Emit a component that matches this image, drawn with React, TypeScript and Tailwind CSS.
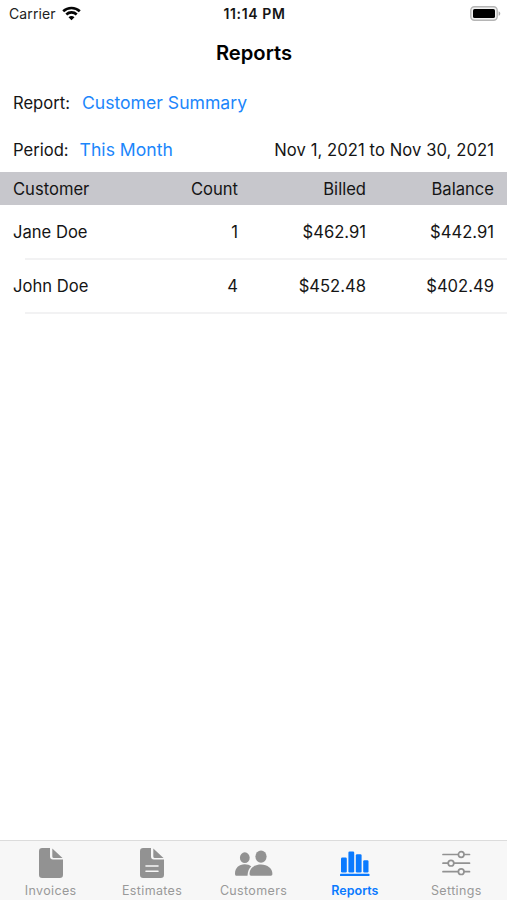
import type { ReactNode } from "react";

const rows = [
  { name: "Jane Doe", count: "1", billed: "$462.91", balance: "$442.91" },
  { name: "John Doe", count: "4", billed: "$452.48", balance: "$402.49" },
];

function StatusBar() {
  return (
    <header className="grid h-[26px] grid-cols-3 items-center pl-[9px] pr-[6px] text-[14px]">
      <div className="flex items-center gap-[6px] text-[#222]">
        <span className="tracking-[0.12px]">Carrier</span>
        <svg width="19" height="15" viewBox="0 0 19 15" fill="none" stroke="#050505" strokeWidth="2.6">
          <path d="M1.2 5.3C5.8.9 13.2.9 17.8 5.3" />
          <path d="M4.3 8.5c2.9-2.8 7.5-2.8 10.4 0" />
          <path d="M9.5 14.2 6.5 11.2c1.7-1.6 4.3-1.6 6 0Z" fill="#050505" stroke="none" />
        </svg>
      </div>
      <span className="pr-px pt-px text-center font-semibold tracking-[0.65px]">11:14 PM</span>
      <svg className="justify-self-end" width="31" height="15" viewBox="0 0 31 15">
        <rect x=".8" y=".8" width="26.4" height="13.4" rx="3.6" fill="#f2f2f2" stroke="#b5b5b5" strokeWidth="1.4" />
        <rect x="3" y="3" width="22" height="9" rx="1.6" fill="#000" />
        <path d="M28.6 5.2c2.2.8 2.2 3.8 0 4.6Z" fill="#aaa" />
      </svg>
    </header>
  );
}

function Tab({ label, active, children }: { label: string; active?: boolean; children: ReactNode }) {
  return (
    <button
      className={`flex flex-1 flex-col items-center text-[12.5px] leading-4 ${
        active ? "font-semibold text-[#0a7aff]" : "font-normal tracking-[0.35px] text-[#999]"
      }`}
    >
      <svg width="48" height="36" viewBox="0 0 48 36" className="mr-[2px] mt-[5px]">
        {children}
      </svg>
      <span className="mt-px">{label}</span>
    </button>
  );
}

export default function App() {
  return (
    <div className="flex h-[900px] w-[507px] flex-col bg-white font-['Inter',sans-serif] text-[16.6px] text-[#151515]">
      <StatusBar />
      <h1 className="flex h-[51px] items-center justify-center pl-px pt-[3px] text-[20.2px] font-semibold text-black">
        Reports
      </h1>
      <div className="flex h-[50px] items-center gap-[12px] px-[13px] pt-[2px]">
        <span className="pt-px">Report:</span>
        <button className="text-[17.6px] text-[#1b86fb]">Customer Summary</button>
      </div>
      <div className="flex h-[45px] items-center gap-[11px] px-[13px] pt-px">
        <span>Period:</span>
        <button className="text-[17.6px] text-[#1b86fb]">This Month</button>
        <span className="ml-auto tracking-[0.08px]">Nov 1, 2021 to Nov 30, 2021</span>
      </div>
      <div className="grid h-[33px] grid-cols-[125px_100px_128px_128px] items-center bg-[#c7c7cc] pl-[13px] pt-px">
        <span>Customer</span>
        <span className="text-right">Count</span>
        <span className="text-right">Billed</span>
        <span className="text-right">Balance</span>
      </div>
      {rows.map((row) => (
        <div key={row.name} className="h-[54px]">
          <div className="grid h-[53px] grid-cols-[125px_100px_128px_128px] items-center pl-[13px] pt-px">
            <span>{row.name}</span>
            <span className="text-right">{row.count}</span>
            <span className="text-right">{row.billed}</span>
            <span className="text-right">{row.balance}</span>
          </div>
          <div className="ml-[25px] h-[2px] bg-[#f2f2f3]" />
        </div>
      ))}
      <nav className="mt-auto flex h-[60px] border-t border-[#dcdcdc] bg-[#f7f7f7]">
        <Tab label="Invoices">
          <path
            d="M16.2 2H24V10.5a3 3 0 0 0 3 3H37V28.8a3.2 3.2 0 0 1-3.2 3.2H16.2a3.2 3.2 0 0 1-3.2-3.2V5.2A3.2 3.2 0 0 1 16.2 2ZM26.3 2.5 36.5 12H27.8a1.5 1.5 0 0 1-1.5-1.5Z"
            fill="#929292"
          />
        </Tab>
        <Tab label="Estimates">
          <path
            d="M16.2 2H24V10.5a3 3 0 0 0 3 3H37V28.8a3.2 3.2 0 0 1-3.2 3.2H16.2a3.2 3.2 0 0 1-3.2-3.2V5.2A3.2 3.2 0 0 1 16.2 2ZM26.3 2.5 36.5 12H27.8a1.5 1.5 0 0 1-1.5-1.5Z"
            fill="#929292"
          />
          <path d="M19 20h12M19 25.2h12" stroke="#f7f7f7" strokeWidth="1.6" strokeLinecap="round" />
        </Tab>
        <Tab label="Customers">
          <g fill="#929292">
            <ellipse cx="15.8" cy="11.7" rx="4.9" ry="5.4" />
            <ellipse cx="32" cy="10.6" rx="5.6" ry="6.2" />
            <path d="M6 27.5c0-5.3 4-9.2 9.7-9.2 2.8 0 5 .8 6.6 2.2-2.2 2-3.5 4.4-3.8 9.3H7.5c-1 0-1.5-.8-1.5-2.3Z" />
            <path d="M20.5 27.8c0-5.5 4.8-9.4 11.4-9.4s11.5 3.9 11.5 9.4c0 1.3-.5 2-1.6 2H22.1c-1.1 0-1.6-.7-1.6-2Z" />
          </g>
        </Tab>
        <Tab label="Reports" active>
          <g fill="#0a7aff">
            <rect x="11" y="11.5" width="5.8" height="15" rx="1.2" />
            <rect x="18.4" y="5.5" width="5.8" height="21" rx="1.2" />
            <rect x="25.8" y="8.3" width="5.8" height="18.2" rx="1.2" />
            <rect x="33.2" y="14.3" width="5.3" height="12.2" rx="1.2" />
            <rect x="10" y="27.7" width="29.5" height="2.4" rx=".7" />
          </g>
        </Tab>
        <Tab label="Settings">
          <g fill="#f7f7f7" stroke="#929292" strokeWidth="1.7" strokeLinecap="round">
            <path d="M12 8.5h26.5M12 17.2h26.5M12 25.7h26.5" />
            <circle cx="30.2" cy="8.5" r="2.8" />
            <circle cx="20" cy="17.2" r="2.8" />
            <circle cx="30.2" cy="25.7" r="2.8" />
          </g>
        </Tab>
      </nav>
    </div>
  );
}
